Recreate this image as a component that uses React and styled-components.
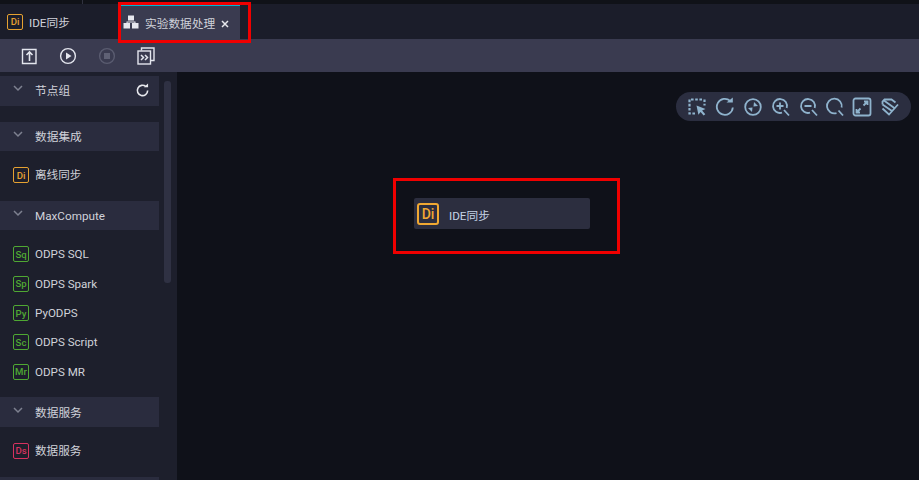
import React from 'react'
import styled, { createGlobalStyle } from 'styled-components'

const GlobalStyle = createGlobalStyle`
  html, body { margin: 0; padding: 0; background: #0f1119; }
  body { font-family: Roboto, "Noto Sans CJK SC", sans-serif; }
`

const Page = styled.div`
  position: relative;
  width: 919px;
  height: 480px;
  overflow: hidden;
  display: flex;
  flex-direction: column;
`

const TopStrip = styled.div`
  height: 4px;
  background: #101218;
  flex: none;
`

const TabBar = styled.div`
  height: 35px;
  flex: none;
  display: flex;
  background: #1b1d2a;
`

const Tab = styled.div`
  display: flex;
  align-items: center;
  box-sizing: border-box;
  height: 35px;
  font-size: 11.7px;
  color: #d0d2da;
  width: ${p => p.$width}px;
  padding-left: ${p => p.$pad}px;
  padding-bottom: ${p => (p.$active ? 1 : 0)}px;
  gap: ${p => p.$gap}px;
  background: ${p => (p.$active ? '#3a3b50' : 'transparent')};
  border-top: ${p => (p.$active ? '2px solid #00b6d2' : '0')};
`

const CloseMark = styled.svg`
  width: 8px;
  height: 8px;
  margin: 3px 0 0 0;
  fill: none;
  stroke: #e6e7ec;
  stroke-width: 1.5;
`

const ToolBar = styled.div`
  height: 33px;
  flex: none;
  display: flex;
  align-items: center;
  background: #3a3b50;
  padding-left: 20px;
`

const ToolIcon = styled.svg`
  flex: none;
  width: 18px;
  height: 18px;
  margin-right: ${p => p.$mr}px;
  fill: none;
  stroke: ${p => (p.$dim ? '#5a5c70' : '#e4e6ee')};
  stroke-width: 1.4;
`

const Main = styled.div`
  flex: 1;
  display: flex;
  min-height: 0;
`

const Sidebar = styled.aside`
  position: relative;
  width: 177px;
  flex: none;
  box-sizing: border-box;
  padding-top: 4px;
  background: #1d1f2c;
  overflow: hidden;
`

const Scroll = styled.div`
  position: absolute;
  left: 164px;
  top: 9px;
  width: 7px;
  height: 202px;
  border-radius: 3px;
  background: #2f3143;
`

const Header = styled.div`
  width: 159px;
  height: 29.5px;
  display: flex;
  align-items: center;
  background: #2a2c3e;
  color: #d0d2da;
  font-size: 11.7px;
`

const Chevron = styled.svg`
  width: 10px;
  height: 7px;
  margin: -4px 12px 0 13px;
  fill: none;
  stroke: #7e8190;
  stroke-width: 1.5;
`

const Refresh = styled.svg`
  width: 15px;
  height: 15px;
  margin-left: auto;
  margin-right: 9px;
  fill: none;
  stroke: #e8e9ee;
  stroke-width: 1.7;
`

const List = styled.div`
  padding: ${p => (p.$empty ? '0 0 16px' : '9.5px 0 11px')};
`

const Item = styled.div`
  height: 29.3px;
  display: flex;
  align-items: center;
  padding-left: 13px;
  gap: 6px;
  color: #d0d2da;
  font-size: 11.6px;
`

// CJK captions sit a pixel higher than the latin ones in the reference
const Label = styled.span`
  margin-bottom: ${p => (p.$cjk ? 2 : 0)}px;
`

const Badge = styled.span`
  flex: none;
  box-sizing: border-box;
  width: ${p => p.$size || 16}px;
  height: ${p => p.$size || 16}px;
  display: inline-flex;
  align-items: center;
  justify-content: center;
  border: ${p => (p.$size ? 2 : 1.5)}px solid ${p => p.$color};
  border-radius: ${p => (p.$size ? 3 : 2)}px;
  color: ${p => p.$color};
  font-family: Roboto, sans-serif;
  font-size: ${p => (p.$size ? 14 : 9.6)}px;
  font-weight: 500;
`

const Canvas = styled.main`
  position: relative;
  flex: 1;
  background: #0f1119;
`

const Pill = styled.div`
  position: absolute;
  left: 499px;
  top: 20px;
  width: 235px;
  height: 29px;
  box-sizing: border-box;
  padding-left: 11px;
  display: flex;
  align-items: center;
  gap: 8px;
  border-radius: 14.5px;
  background: #2b2e40;
`

const PillIcon = styled.svg`
  flex: none;
  width: 20px;
  height: 20px;
  margin-left: ${p => p.$ml || 0}px;
  fill: none;
  stroke: #8fb3cd;
  stroke-width: 1.8;
`

const Node = styled.div`
  position: absolute;
  left: 237px;
  top: 126px;
  width: 176px;
  height: 31px;
  box-sizing: border-box;
  padding-left: 3px;
  display: flex;
  align-items: center;
  gap: 10px;
  border-radius: 2px;
  background: #2c2e3f;
  color: #c4d3e6;
  font-size: 11.7px;
`

const NodeLabel = styled.span`
  margin-top: 2px;
`

const Mark = styled.div`
  position: absolute;
  box-sizing: border-box;
  border: 3px solid #f00000;
  left: ${p => p.$x}px;
  top: ${p => p.$y}px;
  width: ${p => p.$w}px;
  height: ${p => p.$h}px;
  pointer-events: none;
`

const Divider = styled.div`
  position: absolute;
  left: 82px;
  top: 0;
  width: 1px;
  height: 4px;
  background: #30323f;
`

const groups = [
  { title: '数据集成', cjk: true, items: [{ code: 'Di', color: '#e5a131', label: '离线同步', cjk: true }] },
  {
    title: 'MaxCompute',
    items: [
      { code: 'Sq', color: '#4fa833', label: 'ODPS SQL' },
      { code: 'Sp', color: '#4fa833', label: 'ODPS Spark' },
      { code: 'Py', color: '#4fa833', label: 'PyODPS' },
      { code: 'Sc', color: '#4fa833', label: 'ODPS Script' },
      { code: 'Mr', color: '#4fa833', label: 'ODPS MR' },
    ],
  },
  { title: '数据服务', cjk: true, items: [{ code: 'Ds', color: '#d6325f', label: '数据服务', cjk: true }] },
]

function Caret() {
  return (
    <Chevron viewBox="0 0 10 7">
      <path d="M1 1l4 4 4-4" />
    </Chevron>
  )
}

function SectionHead({ title, cjk, children }) {
  return (
    <Header>
      <Caret />
      <Label $cjk={cjk}>{title}</Label>
      {children}
    </Header>
  )
}

function App() {
  return (
    <Page>
      <GlobalStyle />
      <TopStrip />
      <Divider />
      <TabBar>
        <Tab $width={118} $pad={7} $gap={6}>
          <Badge $color="#e5a131">Di</Badge>
          IDE同步
        </Tab>
        <Tab $active $width={122} $pad={5} $gap={6}>
          <svg width="16" height="14" viewBox="0 0 16 14" fill="#e6e7ee">
            <rect x="5" y="0.5" width="6" height="5" />
            <rect x="0.5" y="8" width="6.5" height="5.5" />
            <rect x="9" y="8" width="6.5" height="5.5" />
            <path d="M3.5 8V6.5h9V8h-1V7.5h-7V8z" />
          </svg>
          实验数据处理
          <CloseMark viewBox="0 0 8 8">
            <path d="M1 1l6 6M7 1L1 7" />
          </CloseMark>
        </Tab>
      </TabBar>
      <ToolBar>
        <ToolIcon $mr={21} viewBox="0 0 18 18">
          <path d="M5 2.5h11v14H2.5V2.5H5" />
          <path d="M9.5 14V5.5M6.5 8l3-3 3 3" strokeWidth="1.6" />
        </ToolIcon>
        <ToolIcon $mr={21} viewBox="0 0 18 18">
          <circle cx="9" cy="9" r="7.4" />
          <path d="M7 5.5l5.5 3.5L7 12.5z" fill="#e4e6ee" stroke="none" />
        </ToolIcon>
        <ToolIcon $mr={21} $dim viewBox="0 0 18 18">
          <circle cx="9" cy="9" r="7.4" />
          <rect x="6" y="6" width="6" height="6" fill="#5f6175" stroke="none" />
        </ToolIcon>
        <ToolIcon $mr={0} viewBox="0 0 18 18">
          <rect x="1" y="4" width="12.5" height="13" />
          <path d="M4.5 3.5V1h12.5v12.5H14" />
          <path d="M4 8l2.5 2.5L4 13M8 8l2.5 2.5L8 13" strokeWidth="1.5" />
        </ToolIcon>
      </ToolBar>
      <Main>
        <Sidebar>
          <SectionHead title="节点组" cjk>
            <Refresh viewBox="0 0 16 16">
              <path d="M13.5 8a5.5 5.5 0 1 1-1.9-4.2" />
              <path d="M9.5 4.6h4.4V.6" fill="#e8e9ee" stroke="none" />
            </Refresh>
          </SectionHead>
          <List $empty />
          {groups.map(group => (
            <React.Fragment key={group.title}>
              <SectionHead title={group.title} cjk={group.cjk} />
              <List>
                {group.items.map(item => (
                  <Item key={item.label}>
                    <Badge $color={item.color}>{item.code}</Badge>
                    <Label $cjk={item.cjk}>{item.label}</Label>
                  </Item>
                ))}
              </List>
            </React.Fragment>
          ))}
          <Header />
          <Scroll />
        </Sidebar>
        <Canvas>
          <Pill>
            <PillIcon viewBox="0 0 20 20">
              <path d="M15 2.5H2.5v14H8" strokeDasharray="2.6 1.6" strokeWidth="2.2" />
              <path d="M17.5 2.5v6" strokeDasharray="2.6 1.6" strokeWidth="2.2" />
              <path d="M9.5 8.5l9 3.5-3.4 1.6 3.2 3.7-1.7 1.3-3-3.6-2.2 2.8z" fill="#8fb3cd" stroke="none" />
            </PillIcon>
            <PillIcon viewBox="0 0 20 20">
              <path d="M17.8 10.5a8 8 0 1 1-2.6-6.6" />
              <path d="M11.5 5.5h6.3V.5" fill="#8fb3cd" stroke="none" />
            </PillIcon>
            <PillIcon viewBox="0 0 20 20">
              <circle cx="10" cy="10" r="7.8" />
              <path d="M10.5 9.5l4.5-.5-4-4zM9.5 10.5l-4.5.5 4 4z" fill="#8fb3cd" stroke="none" />
            </PillIcon>
            <PillIcon viewBox="0 0 20 20">
              <path d="M11 15.7A7 7 0 1 1 15.7 11" />
              <path d="M13 13l5 5.5M5.5 9h7M9 5.5v7" />
            </PillIcon>
            <PillIcon viewBox="0 0 20 20">
              <path d="M11 15.7A7 7 0 1 1 15.7 11" />
              <path d="M13 13l5 5.5M5.5 9h7" />
            </PillIcon>
            <PillIcon $ml={-2} viewBox="0 0 20 20">
              <path d="M11.5 16.1A7.4 7.4 0 1 1 16.6 10.5" />
              <path d="M13.5 13.5l4.5 5" />
            </PillIcon>
            <PillIcon $ml={-1} viewBox="0 0 20 20">
              <rect x="1.5" y="1.5" width="17" height="17" rx="2" />
              <path d="M11.5 8.5l3.5-3.5M12 4.5h3.5V8M8.5 11.5L5 15M4.5 12v3.5H8" />
            </PillIcon>
            <PillIcon viewBox="0 0 20 20" strokeWidth="1.5">
              <path d="M2.5 7.5V4.5L4.5 2.5h7l4 3" />
              <path d="M2.5 7.5l9.5 6.5M4 3.5l11 8" />
              <path d="M2.5 11.5l6.5 6L18 7.5" />
            </PillIcon>
          </Pill>
          <Node>
            <Badge $size={22} $color="#f0a832">Di</Badge>
            <NodeLabel>IDE同步</NodeLabel>
          </Node>
        </Canvas>
      </Main>
      <Mark $x={118} $y={2} $w={133} $h={41} />
      <Mark $x={393} $y={178} $w={227} $h={76} />
    </Page>
  )
}

export default App
